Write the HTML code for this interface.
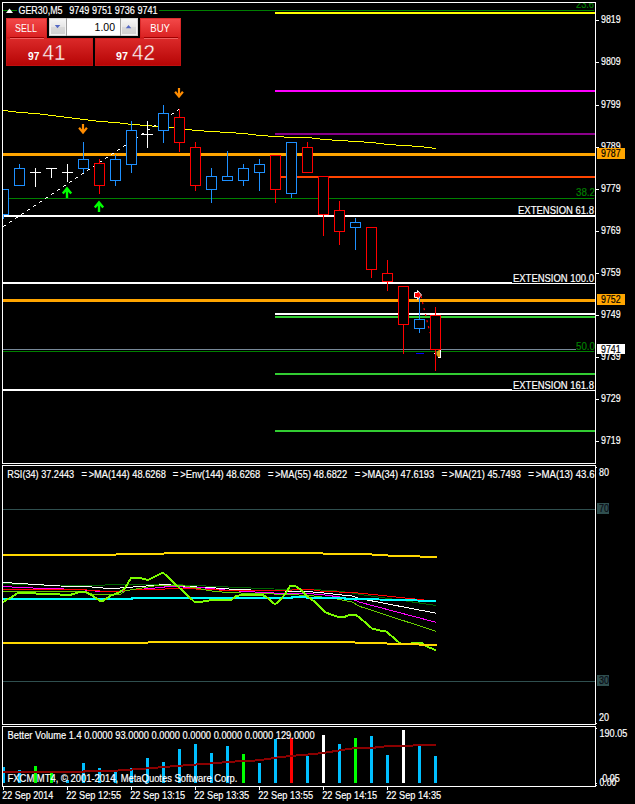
<!DOCTYPE html>
<html><head><meta charset="utf-8"><style>
html,body{margin:0;padding:0;background:#000;}
body{width:635px;height:804px;overflow:hidden;position:relative;}
svg{position:absolute;left:0;top:0;display:block;}
text{font-family:"Liberation Sans",sans-serif;white-space:pre;}
</style></head><body>
<svg width="635" height="804" viewBox="0 0 635 804" shape-rendering="crispEdges">
<defs>
<linearGradient id="gTab" x1="0" y1="0" x2="0" y2="1"><stop offset="0" stop-color="#f44a4a"/><stop offset="1" stop-color="#d92020"/></linearGradient>
<linearGradient id="gLow" x1="0" y1="0" x2="0" y2="1"><stop offset="0" stop-color="#dc2a2a"/><stop offset="1" stop-color="#b50404"/></linearGradient>
<linearGradient id="gBtn" x1="0" y1="0" x2="0" y2="1"><stop offset="0" stop-color="#f4f4f4"/><stop offset="0.5" stop-color="#e6e6e6"/><stop offset="0.5" stop-color="#dadada"/><stop offset="1" stop-color="#d2d2d2"/></linearGradient>
<clipPath id="cMain"><rect x="3" y="3" width="592" height="460"/></clipPath>
<clipPath id="cRsi"><rect x="3" y="466" width="592" height="258"/></clipPath>
<clipPath id="cVol"><rect x="3" y="727" width="592" height="59"/></clipPath>
</defs>
<rect x="2" y="2" width="594" height="1" fill="#ffffff"/>
<rect x="2" y="463" width="594" height="1" fill="#ffffff"/>
<rect x="2" y="2" width="1" height="462" fill="#ffffff"/>
<rect x="595" y="2" width="1" height="462" fill="#ffffff"/>
<rect x="2" y="465" width="594" height="1" fill="#ffffff"/>
<rect x="2" y="724" width="594" height="1" fill="#ffffff"/>
<rect x="2" y="465" width="1" height="260" fill="#ffffff"/>
<rect x="595" y="465" width="1" height="260" fill="#ffffff"/>
<rect x="2" y="726" width="594" height="1" fill="#ffffff"/>
<rect x="2" y="786" width="594" height="1" fill="#ffffff"/>
<rect x="2" y="726" width="1" height="61" fill="#ffffff"/>
<rect x="595" y="726" width="1" height="61" fill="#ffffff"/>
<g clip-path="url(#cMain)">
<rect x="3" y="10" width="591" height="1" fill="#008000"/>
<rect x="275" y="12" width="321" height="2" fill="#ffff00"/>
<rect x="275" y="90" width="321" height="2" fill="#ff00ff"/>
<rect x="275" y="133" width="321" height="2" fill="#8b008b"/>
<rect x="3" y="153" width="593" height="3" fill="#ffa500"/>
<rect x="275" y="176" width="321" height="2" fill="#ff4500"/>
<rect x="3" y="198" width="591" height="1" fill="#008000"/>
<rect x="3" y="215" width="593" height="2" fill="#ffffff"/>
<rect x="3" y="282" width="593" height="2" fill="#ffffff"/>
<rect x="3" y="299" width="593" height="3" fill="#ffa500"/>
<rect x="275" y="313" width="321" height="2" fill="#ffffff"/>
<rect x="275" y="316" width="321" height="2" fill="#32cd32"/>
<rect x="3" y="349" width="573" height="1" fill="#778899"/>
<rect x="3" y="351" width="591" height="1" fill="#008000"/>
<rect x="275" y="373" width="321" height="2" fill="#32cd32"/>
<rect x="3" y="389" width="593" height="2" fill="#ffffff"/>
<rect x="275" y="430" width="321" height="2" fill="#32cd32"/>
<rect x="3" y="110" width="5" height="1" fill="#ffff00"/>
<rect x="8" y="111" width="8" height="1" fill="#ffff00"/>
<rect x="16" y="112" width="12" height="1" fill="#ffff00"/>
<rect x="28" y="113" width="12" height="1" fill="#ffff00"/>
<rect x="40" y="114" width="8" height="1" fill="#ffff00"/>
<rect x="48" y="115" width="8" height="1" fill="#ffff00"/>
<rect x="56" y="116" width="8" height="1" fill="#ffff00"/>
<rect x="64" y="117" width="8" height="1" fill="#ffff00"/>
<rect x="72" y="118" width="8" height="1" fill="#ffff00"/>
<rect x="80" y="119" width="8" height="1" fill="#ffff00"/>
<rect x="88" y="120" width="8" height="1" fill="#ffff00"/>
<rect x="96" y="121" width="12" height="1" fill="#ffff00"/>
<rect x="108" y="122" width="12" height="1" fill="#ffff00"/>
<rect x="120" y="123" width="8" height="1" fill="#ffff00"/>
<rect x="128" y="124" width="12" height="1" fill="#ffff00"/>
<rect x="140" y="125" width="12" height="1" fill="#ffff00"/>
<rect x="152" y="126" width="12" height="1" fill="#ffff00"/>
<rect x="164" y="127" width="12" height="1" fill="#ffff00"/>
<rect x="176" y="128" width="8" height="1" fill="#ffff00"/>
<rect x="184" y="129" width="8" height="1" fill="#ffff00"/>
<rect x="192" y="130" width="12" height="1" fill="#ffff00"/>
<rect x="204" y="131" width="16" height="1" fill="#ffff00"/>
<rect x="220" y="132" width="16" height="1" fill="#ffff00"/>
<rect x="236" y="133" width="12" height="1" fill="#ffff00"/>
<rect x="248" y="134" width="8" height="1" fill="#ffff00"/>
<rect x="256" y="135" width="12" height="1" fill="#ffff00"/>
<rect x="268" y="136" width="16" height="1" fill="#ffff00"/>
<rect x="284" y="137" width="28" height="1" fill="#ffff00"/>
<rect x="312" y="138" width="8" height="1" fill="#ffff00"/>
<rect x="320" y="139" width="12" height="1" fill="#ffff00"/>
<rect x="332" y="140" width="16" height="1" fill="#ffff00"/>
<rect x="348" y="141" width="16" height="1" fill="#ffff00"/>
<rect x="364" y="142" width="12" height="1" fill="#ffff00"/>
<rect x="376" y="143" width="8" height="1" fill="#ffff00"/>
<rect x="384" y="144" width="12" height="1" fill="#ffff00"/>
<rect x="396" y="145" width="16" height="1" fill="#ffff00"/>
<rect x="412" y="146" width="12" height="1" fill="#ffff00"/>
<rect x="424" y="147" width="8" height="1" fill="#ffff00"/>
<rect x="432" y="148" width="4" height="1" fill="#ffff00"/>
<rect x="3" y="226" width="1" height="1" fill="#ffffff"/>
<rect x="4" y="225" width="2" height="1" fill="#ffffff"/>
<rect x="9" y="222" width="1" height="1" fill="#ffffff"/>
<rect x="10" y="221" width="2" height="1" fill="#ffffff"/>
<rect x="15" y="218" width="1" height="1" fill="#ffffff"/>
<rect x="16" y="217" width="2" height="1" fill="#ffffff"/>
<rect x="21" y="214" width="1" height="1" fill="#ffffff"/>
<rect x="22" y="213" width="2" height="1" fill="#ffffff"/>
<rect x="27" y="210" width="1" height="1" fill="#ffffff"/>
<rect x="28" y="209" width="2" height="1" fill="#ffffff"/>
<rect x="33" y="206" width="1" height="1" fill="#ffffff"/>
<rect x="34" y="205" width="2" height="1" fill="#ffffff"/>
<rect x="39" y="202" width="1" height="1" fill="#ffffff"/>
<rect x="40" y="201" width="2" height="1" fill="#ffffff"/>
<rect x="45" y="198" width="1" height="1" fill="#ffffff"/>
<rect x="46" y="197" width="2" height="1" fill="#ffffff"/>
<rect x="51" y="194" width="1" height="1" fill="#ffffff"/>
<rect x="52" y="193" width="2" height="1" fill="#ffffff"/>
<rect x="57" y="190" width="1" height="1" fill="#ffffff"/>
<rect x="58" y="189" width="2" height="1" fill="#ffffff"/>
<rect x="63" y="186" width="1" height="1" fill="#ffffff"/>
<rect x="64" y="185" width="2" height="1" fill="#ffffff"/>
<rect x="69" y="182" width="1" height="1" fill="#ffffff"/>
<rect x="70" y="181" width="2" height="1" fill="#ffffff"/>
<rect x="75" y="178" width="1" height="1" fill="#ffffff"/>
<rect x="76" y="177" width="2" height="1" fill="#ffffff"/>
<rect x="81" y="174" width="1" height="1" fill="#ffffff"/>
<rect x="82" y="173" width="2" height="1" fill="#ffffff"/>
<rect x="87" y="170" width="1" height="1" fill="#ffffff"/>
<rect x="88" y="169" width="2" height="1" fill="#ffffff"/>
<rect x="93" y="166" width="1" height="1" fill="#ffffff"/>
<rect x="94" y="165" width="2" height="1" fill="#ffffff"/>
<rect x="99" y="162" width="1" height="1" fill="#ffffff"/>
<rect x="100" y="161" width="2" height="1" fill="#ffffff"/>
<rect x="105" y="158" width="1" height="1" fill="#ffffff"/>
<rect x="106" y="157" width="2" height="1" fill="#ffffff"/>
<rect x="111" y="154" width="1" height="1" fill="#ffffff"/>
<rect x="112" y="153" width="2" height="1" fill="#ffffff"/>
<rect x="117" y="150" width="1" height="1" fill="#ffffff"/>
<rect x="118" y="149" width="2" height="1" fill="#ffffff"/>
<rect x="123" y="146" width="1" height="1" fill="#ffffff"/>
<rect x="124" y="145" width="2" height="1" fill="#ffffff"/>
<rect x="129" y="142" width="1" height="1" fill="#ffffff"/>
<rect x="130" y="141" width="2" height="1" fill="#ffffff"/>
<rect x="135" y="138" width="1" height="1" fill="#ffffff"/>
<rect x="136" y="137" width="2" height="1" fill="#ffffff"/>
<rect x="141" y="134" width="1" height="1" fill="#ffffff"/>
<rect x="142" y="133" width="2" height="1" fill="#ffffff"/>
<rect x="147" y="130" width="1" height="1" fill="#ffffff"/>
<rect x="148" y="129" width="2" height="1" fill="#ffffff"/>
<rect x="153" y="126" width="1" height="1" fill="#ffffff"/>
<rect x="154" y="125" width="2" height="1" fill="#ffffff"/>
<rect x="159" y="122" width="1" height="1" fill="#ffffff"/>
<rect x="160" y="121" width="2" height="1" fill="#ffffff"/>
<rect x="165" y="118" width="1" height="1" fill="#ffffff"/>
<rect x="166" y="117" width="2" height="1" fill="#ffffff"/>
<rect x="171" y="114" width="1" height="1" fill="#ffffff"/>
<rect x="172" y="113" width="2" height="1" fill="#ffffff"/>
<rect x="177" y="110" width="1" height="1" fill="#ffffff"/>
<rect x="178" y="109" width="2" height="1" fill="#ffffff"/>
<rect x="3" y="189" width="1" height="30" fill="#1e90ff"/>
<rect x="-1.5" y="189.5" width="10" height="25" fill="#000" stroke="#1e90ff" stroke-width="1"/>
<rect x="19" y="164" width="1" height="22" fill="#1e90ff"/>
<rect x="14.5" y="168.5" width="10" height="17" fill="#000" stroke="#1e90ff" stroke-width="1"/>
<rect x="35" y="168" width="1" height="19" fill="#ffffff"/>
<rect x="30" y="172" width="11" height="1" fill="#ffffff"/>
<rect x="51" y="168" width="1" height="10" fill="#ffffff"/>
<rect x="46" y="168" width="11" height="1" fill="#ffffff"/>
<rect x="67" y="164" width="1" height="18" fill="#ffffff"/>
<rect x="62" y="172" width="11" height="1" fill="#ffffff"/>
<rect x="83" y="142" width="1" height="31" fill="#1e90ff"/>
<rect x="78.5" y="159.5" width="10" height="9" fill="#000" stroke="#1e90ff" stroke-width="1"/>
<rect x="99" y="159" width="1" height="35" fill="#ff0000"/>
<rect x="94.5" y="163.5" width="10" height="22" fill="#000" stroke="#ff0000" stroke-width="1"/>
<rect x="115" y="155" width="1" height="31" fill="#1e90ff"/>
<rect x="110.5" y="159.5" width="10" height="21" fill="#000" stroke="#1e90ff" stroke-width="1"/>
<rect x="131" y="121" width="1" height="52" fill="#1e90ff"/>
<rect x="126.5" y="130.5" width="10" height="34" fill="#000" stroke="#1e90ff" stroke-width="1"/>
<rect x="147" y="121" width="1" height="27" fill="#ffffff"/>
<rect x="142" y="134" width="11" height="1" fill="#ffffff"/>
<rect x="163" y="105" width="1" height="38" fill="#1e90ff"/>
<rect x="158.5" y="113.5" width="10" height="17" fill="#000" stroke="#1e90ff" stroke-width="1"/>
<rect x="179" y="109" width="1" height="43" fill="#ff0000"/>
<rect x="174.5" y="117.5" width="10" height="25" fill="#000" stroke="#ff0000" stroke-width="1"/>
<rect x="195" y="142" width="1" height="49" fill="#ff0000"/>
<rect x="190.5" y="147.5" width="10" height="38" fill="#000" stroke="#ff0000" stroke-width="1"/>
<rect x="211" y="168" width="1" height="35" fill="#1e90ff"/>
<rect x="206.5" y="176.5" width="10" height="13" fill="#000" stroke="#1e90ff" stroke-width="1"/>
<rect x="227" y="151" width="1" height="30" fill="#1e90ff"/>
<rect x="222.5" y="176.5" width="10" height="4" fill="#000" stroke="#1e90ff" stroke-width="1"/>
<rect x="243" y="164" width="1" height="22" fill="#1e90ff"/>
<rect x="238.5" y="168.5" width="10" height="12" fill="#000" stroke="#1e90ff" stroke-width="1"/>
<rect x="259" y="159" width="1" height="32" fill="#1e90ff"/>
<rect x="254.5" y="164.5" width="10" height="8" fill="#000" stroke="#1e90ff" stroke-width="1"/>
<rect x="275" y="155" width="1" height="48" fill="#ff0000"/>
<rect x="270.5" y="155.5" width="10" height="34" fill="#000" stroke="#ff0000" stroke-width="1"/>
<rect x="291" y="142" width="1" height="56" fill="#1e90ff"/>
<rect x="286.5" y="142.5" width="10" height="51" fill="#000" stroke="#1e90ff" stroke-width="1"/>
<rect x="307" y="142" width="1" height="31" fill="#ff0000"/>
<rect x="302.5" y="147.5" width="10" height="25" fill="#000" stroke="#ff0000" stroke-width="1"/>
<rect x="323" y="176" width="1" height="60" fill="#ff0000"/>
<rect x="318.5" y="176.5" width="10" height="38" fill="#000" stroke="#ff0000" stroke-width="1"/>
<rect x="339" y="201" width="1" height="44" fill="#ff0000"/>
<rect x="334.5" y="210.5" width="10" height="21" fill="#000" stroke="#ff0000" stroke-width="1"/>
<rect x="355" y="218" width="1" height="32" fill="#1e90ff"/>
<rect x="350.5" y="222.5" width="10" height="5" fill="#000" stroke="#1e90ff" stroke-width="1"/>
<rect x="371" y="227" width="1" height="51" fill="#ff0000"/>
<rect x="366.5" y="227.5" width="10" height="42" fill="#000" stroke="#ff0000" stroke-width="1"/>
<rect x="387" y="260" width="1" height="31" fill="#ff0000"/>
<rect x="382.5" y="273.5" width="10" height="8" fill="#000" stroke="#ff0000" stroke-width="1"/>
<rect x="403" y="286" width="1" height="68" fill="#ff0000"/>
<rect x="398.5" y="286.5" width="10" height="38" fill="#000" stroke="#ff0000" stroke-width="1"/>
<rect x="419" y="294" width="1" height="39" fill="#1e90ff"/>
<rect x="414.5" y="319.5" width="10" height="9" fill="#000" stroke="#1e90ff" stroke-width="1"/>
<rect x="435" y="307" width="1" height="64" fill="#ff0000"/>
<rect x="430.5" y="315.5" width="10" height="34" fill="#000" stroke="#ff0000" stroke-width="1"/>
<path d="M83 124 V133 M79.1 127.8 L83 132.6 L86.9 127.8" fill="none" stroke="#ff8c00" stroke-width="2.2" shape-rendering="auto"/>
<path d="M179 88 V97 M175.1 91.8 L179 96.6 L182.9 91.8" fill="none" stroke="#ff8c00" stroke-width="2.2" shape-rendering="auto"/>
<path d="M67 198 V188.5 M62.8 193.4 L67 188.4 L71.2 193.4" fill="none" stroke="#00ff00" stroke-width="2.4" shape-rendering="auto"/>
<path d="M99 212 V202.5 M94.8 207.4 L99 202.4 L103.2 207.4" fill="none" stroke="#00ff00" stroke-width="2.4" shape-rendering="auto"/>
<path d="M414.5 292.5 h3 v-2 l4 4.5 l-4 4.5 v-2 h-3 z" fill="#ff0000" stroke="#ffffff" stroke-width="1" shape-rendering="auto"/>
<line x1="421" y1="296" x2="430" y2="333" stroke="#ff0000" stroke-width="1.2" stroke-dasharray="2.2 4" shape-rendering="auto"/>
<rect x="416" y="353" width="8" height="1" fill="#0000ff"/>
<path d="M436.5 352 L439 350 L440 350 L440 357.5 L438.5 357.5 L436.5 355 Z" fill="#daa520" shape-rendering="auto"/>
<rect x="440" y="350" width="1" height="8" fill="#ffffff"/>
<rect x="438" y="357" width="3" height="1" fill="#ffffff"/>
<rect x="434" y="353" width="1" height="1" fill="#ffffff"/>
<rect x="17" y="4" width="142" height="12" fill="#000"/>
<path d="M6 13 L13 13 L9.5 8.5 Z" fill="#fff" shape-rendering="auto"/>
<text x="18.5" y="14" font-size="10.3" fill="#ffffff" stroke="#ffffff" stroke-width="0.18" textLength="44" lengthAdjust="spacingAndGlyphs">GER30,M5</text>
<text x="69.2" y="14" font-size="10.3" fill="#ffffff" stroke="#ffffff" stroke-width="0.18" textLength="88.5" lengthAdjust="spacingAndGlyphs">9749 9751 9736 9741</text>
<text x="576" y="8" font-size="10.3" fill="#008000" stroke="#008000" stroke-width="0.18" textLength="18" lengthAdjust="spacingAndGlyphs">23.6</text>
<text x="576" y="196" font-size="10.3" fill="#008000" stroke="#008000" stroke-width="0.18" textLength="19" lengthAdjust="spacingAndGlyphs">38.2</text>
<text x="576" y="349.5" font-size="10.3" fill="#008000" stroke="#008000" stroke-width="0.18" textLength="19" lengthAdjust="spacingAndGlyphs">50.0</text>
<rect x="517" y="204" width="78" height="11.0" fill="#000"/>
<text x="518" y="213.8" font-size="10.3" fill="#ffffff" stroke="#ffffff" stroke-width="0.18" textLength="76" lengthAdjust="spacingAndGlyphs">EXTENSION 61.8</text>
<rect x="512" y="272" width="83" height="10.699999999999989" fill="#000"/>
<text x="513" y="281.5" font-size="10.3" fill="#ffffff" stroke="#ffffff" stroke-width="0.18" textLength="81" lengthAdjust="spacingAndGlyphs">EXTENSION 100.0</text>
<rect x="512" y="379" width="83" height="11.0" fill="#000"/>
<text x="513" y="388.8" font-size="10.3" fill="#ffffff" stroke="#ffffff" stroke-width="0.18" textLength="81" lengthAdjust="spacingAndGlyphs">EXTENSION 161.8</text>
</g>
<rect x="47" y="17" width="93" height="21" fill="#000"/>
<rect x="6" y="18" width="41" height="20" fill="url(#gTab)"/>
<rect x="140" y="18" width="41" height="20" fill="url(#gTab)"/>
<rect x="6" y="38" width="87" height="28" fill="url(#gLow)"/>
<rect x="95" y="38" width="86" height="28" fill="url(#gLow)"/>
<rect x="6.5" y="18.5" width="40" height="19" fill="none" stroke="#c81818" stroke-opacity="0.55"/>
<rect x="140.5" y="18.5" width="40" height="19" fill="none" stroke="#c81818" stroke-opacity="0.55"/>
<rect x="6.5" y="38.5" width="86" height="27" fill="none" stroke="#c81818" stroke-opacity="0.55"/>
<rect x="95.5" y="38.5" width="85" height="27" fill="none" stroke="#c81818" stroke-opacity="0.55"/>
<rect x="10" y="37" width="34" height="1" fill="#a00000"/>
<rect x="10" y="38" width="34" height="1" fill="#f06060"/>
<rect x="144" y="37" width="34" height="1" fill="#a00000"/>
<rect x="144" y="38" width="34" height="1" fill="#f06060"/>
<text x="15.1" y="32" font-size="10.8" fill="#fff" textLength="21.8" lengthAdjust="spacingAndGlyphs">SELL</text>
<text x="150.3" y="32" font-size="10.8" fill="#fff" textLength="19.7" lengthAdjust="spacingAndGlyphs">BUY</text>
<text x="28" y="59.5" font-size="10.8" fill="#fff" textLength="11.4" lengthAdjust="spacingAndGlyphs" font-weight="bold">97</text>
<text x="42.5" y="59.5" font-size="21.5" fill="#fff" textLength="23" lengthAdjust="spacingAndGlyphs" stroke="#c41414" stroke-width="0.4">41</text>
<text x="116" y="59.5" font-size="10.8" fill="#fff" textLength="11.9" lengthAdjust="spacingAndGlyphs" font-weight="bold">97</text>
<text x="132" y="59.5" font-size="21.5" fill="#fff" textLength="23" lengthAdjust="spacingAndGlyphs" stroke="#c41414" stroke-width="0.4">42</text>
<rect x="49" y="18" width="89" height="18" fill="#d4d4d4"/>
<rect x="50" y="19" width="16" height="16" fill="#f2f2f2"/>
<rect x="51" y="20" width="14" height="14" fill="url(#gBtn)"/>
<rect x="121" y="19" width="16" height="16" fill="#f2f2f2"/>
<rect x="122" y="20" width="14" height="14" fill="url(#gBtn)"/>
<rect x="66" y="18" width="1" height="18" fill="#a0a0a0"/>
<rect x="120" y="18" width="1" height="18" fill="#a0a0a0"/>
<rect x="67" y="19" width="53" height="16" fill="#ffffff"/>
<path d="M54.8 25 L60.3 25 L57.5 28.3 Z" fill="#5468c4" shape-rendering="auto"/>
<path d="M125.8 28.3 L131.3 28.3 L128.5 25 Z" fill="#5468c4" shape-rendering="auto"/>
<text x="115" y="30.7" font-size="10.5" fill="#000" text-anchor="end">1.00</text>
<rect x="596" y="20" width="3" height="1" fill="#ffffff"/>
<text x="601" y="23.1" font-size="10.3" fill="#ffffff" stroke="#ffffff" stroke-width="0.18" textLength="19.7" lengthAdjust="spacingAndGlyphs">9819</text>
<rect x="596" y="62" width="3" height="1" fill="#ffffff"/>
<text x="601" y="65.1" font-size="10.3" fill="#ffffff" stroke="#ffffff" stroke-width="0.18" textLength="19.7" lengthAdjust="spacingAndGlyphs">9809</text>
<rect x="596" y="105" width="3" height="1" fill="#ffffff"/>
<text x="601" y="108.1" font-size="10.3" fill="#ffffff" stroke="#ffffff" stroke-width="0.18" textLength="19.7" lengthAdjust="spacingAndGlyphs">9799</text>
<rect x="596" y="147" width="3" height="1" fill="#ffffff"/>
<text x="601" y="150.1" font-size="10.3" fill="#ffffff" stroke="#ffffff" stroke-width="0.18" textLength="19.7" lengthAdjust="spacingAndGlyphs">9789</text>
<rect x="596" y="189" width="3" height="1" fill="#ffffff"/>
<text x="601" y="192.1" font-size="10.3" fill="#ffffff" stroke="#ffffff" stroke-width="0.18" textLength="19.7" lengthAdjust="spacingAndGlyphs">9779</text>
<rect x="596" y="231" width="3" height="1" fill="#ffffff"/>
<text x="601" y="234.1" font-size="10.3" fill="#ffffff" stroke="#ffffff" stroke-width="0.18" textLength="19.7" lengthAdjust="spacingAndGlyphs">9769</text>
<rect x="596" y="273" width="3" height="1" fill="#ffffff"/>
<text x="601" y="276.1" font-size="10.3" fill="#ffffff" stroke="#ffffff" stroke-width="0.18" textLength="19.7" lengthAdjust="spacingAndGlyphs">9759</text>
<rect x="596" y="315" width="3" height="1" fill="#ffffff"/>
<text x="601" y="318.1" font-size="10.3" fill="#ffffff" stroke="#ffffff" stroke-width="0.18" textLength="19.7" lengthAdjust="spacingAndGlyphs">9749</text>
<rect x="596" y="357" width="3" height="1" fill="#ffffff"/>
<text x="601" y="360.1" font-size="10.3" fill="#ffffff" stroke="#ffffff" stroke-width="0.18" textLength="19.7" lengthAdjust="spacingAndGlyphs">9739</text>
<rect x="596" y="399" width="3" height="1" fill="#ffffff"/>
<text x="601" y="402.1" font-size="10.3" fill="#ffffff" stroke="#ffffff" stroke-width="0.18" textLength="19.7" lengthAdjust="spacingAndGlyphs">9729</text>
<rect x="596" y="441" width="3" height="1" fill="#ffffff"/>
<text x="601" y="444.1" font-size="10.3" fill="#ffffff" stroke="#ffffff" stroke-width="0.18" textLength="19.7" lengthAdjust="spacingAndGlyphs">9719</text>
<rect x="597" y="148" width="28" height="11" fill="#ffa500"/>
<text x="601" y="156.7" font-size="10.3" fill="#000" stroke="#000" stroke-width="0.18" textLength="19.7" lengthAdjust="spacingAndGlyphs">9787</text>
<rect x="597" y="294" width="28" height="11" fill="#ffa500"/>
<text x="601" y="302.7" font-size="10.3" fill="#000" stroke="#000" stroke-width="0.18" textLength="19.7" lengthAdjust="spacingAndGlyphs">9752</text>
<rect x="597" y="344" width="28" height="10" fill="#ffffff"/>
<text x="601" y="352.7" font-size="10.3" fill="#000" stroke="#000" stroke-width="0.18" textLength="19.7" lengthAdjust="spacingAndGlyphs">9741</text>
<g clip-path="url(#cRsi)">
<text x="7.2" y="477.8" font-size="10.3" fill="#ffffff" stroke="#ffffff" stroke-width="0.18" textLength="67" lengthAdjust="spacingAndGlyphs">RSI(34) 37.2443</text>
<text x="81.4" y="477.8" font-size="10.3" fill="#ffffff" stroke="#ffffff" stroke-width="0.18" textLength="84.4" lengthAdjust="spacingAndGlyphs">= &gt;MA(144) 48.6268</text>
<text x="172.8" y="477.8" font-size="10.3" fill="#ffffff" stroke="#ffffff" stroke-width="0.18" textLength="87.5" lengthAdjust="spacingAndGlyphs">= &gt;Env(144) 48.6268</text>
<text x="267.9" y="477.8" font-size="10.3" fill="#ffffff" stroke="#ffffff" stroke-width="0.18" textLength="79.3" lengthAdjust="spacingAndGlyphs">= &gt;MA(55) 48.6822</text>
<text x="354.8" y="477.8" font-size="10.3" fill="#ffffff" stroke="#ffffff" stroke-width="0.18" textLength="79.4" lengthAdjust="spacingAndGlyphs">= &gt;MA(34) 47.6193</text>
<text x="441.7" y="477.8" font-size="10.3" fill="#ffffff" stroke="#ffffff" stroke-width="0.18" textLength="79.3" lengthAdjust="spacingAndGlyphs">= &gt;MA(21) 45.7493</text>
<text x="528.3" y="477.8" font-size="10.3" fill="#ffffff" stroke="#ffffff" stroke-width="0.18" textLength="66.2" lengthAdjust="spacingAndGlyphs">= &gt;MA(13) 43.6</text>
<rect x="3" y="509" width="592" height="1" fill="#2f4f4f"/>
<rect x="3" y="681" width="592" height="1" fill="#2f4f4f"/>
<polyline points="3,583.5 20,584.5 68,585.7 160,584 260,588.4 274,589 321,590 337,591 352,593 360,594.4 436,605.4" fill="none" stroke="#006400" stroke-width="1" stroke-linejoin="miter"/>
<polyline points="3,582.5 12,583 28,584 44,585 60,586 88,586.5 96,587.5 110,588.5 120,588 140,586.5 165,584.5 180,585.8 197,587 212,587.7 236,589.5 260,590.3 284,591 306,591.5 321,592.6 337,594.5 352,596 360,598.6 436,613.2" fill="none" stroke="#ffffff" stroke-width="1" stroke-linejoin="miter"/>
<polyline points="3,586.4 20,587.6 80,589.5 100,591.5 120,591.5 130,590 150,588.6 170,586.4 205,588 230,590.5 252,591.7 260,592.6 274,593 290,593 306,593.5 321,594.5 337,596.6 352,599 360,602.3 436,622.3" fill="none" stroke="#ff00ff" stroke-width="1" stroke-linejoin="miter"/>
<polyline points="3,589.3 80,589.5 100,591 120,591 130,590 150,589.5 165,589 180,588.3 230,590.5 252,590.8 312,589.6 320,591 360,593.1 436,601.3" fill="none" stroke="#ff0000" stroke-width="1" stroke-linejoin="miter"/>
<polyline points="3,591.4 80,592 96,594.6 120,594.6 125,590.8 160,585 180,585 210,590.8 228,592.6 290,594.5 312,595.7 337,599 352,602 360,606.5 436,631.3" fill="none" stroke="#66cc00" stroke-width="1" stroke-linejoin="miter"/>
<polyline points="3,599 132,599 132,598 292,598 292,596.5 307,596.5 307,598.3 345,598.3 345,599 360,599 436,601" fill="none" stroke="#00ffff" stroke-width="2" stroke-linejoin="miter"/>
<polyline points="3,602 8,599 12,597 16,594 18,593 28,593 44,594 60,594.5 70,595 80,592 86,592 96,598 100,601 103,601 110,596 120,592 125,588 131,578 140,578 148,580 163,572.6 194.6,602 200,602 206,601 211.6,600 232,599.5 236,596 245,594.5 262,594.5 268,598 275,604.5 280,600 286,593 290,586 295,586 300,589 307,596 315,602 325,612 333,615.3 339,617 345.5,616.5 350.5,614.6 355.6,614.6 360,618 372,628.4 377.6,630 386.4,631.6 391.5,636 400.3,643.5 411,643.5 412,642.5 421.7,642.5 425.5,646 436,650.2" fill="none" stroke="#7cfc00" stroke-width="2" stroke-linejoin="miter"/>
<rect x="3" y="554" width="113" height="2" fill="#ffd700"/>
<rect x="116" y="553" width="48" height="2" fill="#ffd700"/>
<rect x="164" y="552" width="159" height="2" fill="#ffd700"/>
<rect x="323" y="553" width="49" height="2" fill="#ffd700"/>
<rect x="372" y="554" width="16" height="2" fill="#ffd700"/>
<rect x="388" y="555" width="32" height="2" fill="#ffd700"/>
<rect x="420" y="556" width="17" height="2" fill="#ffd700"/>
<rect x="3" y="642" width="145" height="2" fill="#ffd700"/>
<rect x="148" y="641" width="207" height="2" fill="#ffd700"/>
<rect x="355" y="642" width="32" height="2" fill="#ffd700"/>
<rect x="387" y="643" width="32" height="2" fill="#ffd700"/>
<rect x="419" y="644" width="18" height="2" fill="#ffd700"/>
</g>
<rect x="597" y="503" width="12" height="11" fill="#2f4f4f"/>
<text x="599" y="512.3" font-size="10.3" fill="#0a0a14" stroke="#0a0a14" stroke-width="0.18" textLength="10" lengthAdjust="spacingAndGlyphs">70</text>
<rect x="597" y="675" width="12" height="11" fill="#2f4f4f"/>
<text x="599" y="684.3" font-size="10.3" fill="#0a0a14" stroke="#0a0a14" stroke-width="0.18" textLength="10" lengthAdjust="spacingAndGlyphs">30</text>
<text x="599" y="476.2" font-size="10.3" fill="#ffffff" stroke="#ffffff" stroke-width="0.18" textLength="10" lengthAdjust="spacingAndGlyphs">80</text>
<text x="599" y="720.7" font-size="10.3" fill="#ffffff" stroke="#ffffff" stroke-width="0.18" textLength="10" lengthAdjust="spacingAndGlyphs">20</text>
<rect x="596" y="467" width="1" height="1" fill="#ffffff"/>
<rect x="596" y="723" width="1" height="1" fill="#ffffff"/>
<g clip-path="url(#cVol)">
<rect x="2" y="767" width="3" height="16" fill="#00bfff"/>
<rect x="18" y="770" width="3" height="13" fill="#00bfff"/>
<rect x="34" y="766" width="3" height="17" fill="#00ff00"/>
<rect x="50" y="773" width="3" height="10" fill="#00ff00"/>
<rect x="66" y="780" width="3" height="3" fill="#00bfff"/>
<rect x="82" y="763" width="3" height="20" fill="#00bfff"/>
<rect x="98" y="768" width="3" height="15" fill="#00bfff"/>
<rect x="114" y="772" width="3" height="11" fill="#00bfff"/>
<rect x="130" y="768" width="3" height="15" fill="#00bfff"/>
<rect x="146" y="758" width="3" height="25" fill="#00bfff"/>
<rect x="162" y="762" width="3" height="21" fill="#00bfff"/>
<rect x="178" y="749" width="3" height="34" fill="#00bfff"/>
<rect x="194" y="744" width="3" height="39" fill="#00bfff"/>
<rect x="210" y="753" width="3" height="30" fill="#00bfff"/>
<rect x="226" y="746" width="3" height="37" fill="#00bfff"/>
<rect x="242" y="754" width="3" height="29" fill="#00ff00"/>
<rect x="258" y="763" width="3" height="20" fill="#00bfff"/>
<rect x="274" y="739" width="3" height="44" fill="#00bfff"/>
<rect x="290" y="738" width="3" height="45" fill="#ff0000"/>
<rect x="306" y="756" width="3" height="27" fill="#00bfff"/>
<rect x="322" y="735" width="3" height="48" fill="#ffffff"/>
<rect x="338" y="744" width="3" height="39" fill="#00bfff"/>
<rect x="354" y="738" width="3" height="45" fill="#00ff00"/>
<rect x="370" y="736" width="3" height="47" fill="#00bfff"/>
<rect x="386" y="755" width="3" height="28" fill="#00bfff"/>
<rect x="402" y="730" width="3" height="53" fill="#ffffff"/>
<rect x="418" y="746" width="3" height="37" fill="#00bfff"/>
<rect x="434" y="756" width="3" height="27" fill="#00bfff"/>
<polyline points="3,772 84,772 84,771 117,770.6 145,768.6 179,765.8 210,763.5 238.6,761.2 259.5,760.3 275,757.8 291,755.9 307,754.6 323,753 339,750.5 355,748 371,748 389,746 404,745.7 436,745" fill="none" stroke="#8b0000" stroke-width="2" stroke-linejoin="miter"/>
<text x="7.6" y="781.9" font-size="10.3" fill="#ffffff" stroke="#ffffff" stroke-width="0.18" textLength="229.7" lengthAdjust="spacingAndGlyphs">FXCM MT4, © 2001-2014, MetaQuotes Software Corp.</text>
<text x="7.6" y="738.6" font-size="10.3" fill="#ffffff" stroke="#ffffff" stroke-width="0.18" textLength="307" lengthAdjust="spacingAndGlyphs">Better Volume 1.4 0.0000 93.0000 0.0000 0.0000 0.0000 0.0000 129.0000</text>
</g>
<text x="599.5" y="736.5" font-size="10" fill="#ffffff" stroke="#ffffff" stroke-width="0.18" textLength="27.8" lengthAdjust="spacingAndGlyphs">190.05</text>
<text x="602.2" y="782" font-size="10.3" fill="#ffffff" stroke="#ffffff" stroke-width="0.18" textLength="17.6" lengthAdjust="spacingAndGlyphs">0.05</text>
<text x="599.4" y="785.6" font-size="10.3" fill="#ffffff" stroke="#ffffff" stroke-width="0.18" textLength="17" lengthAdjust="spacingAndGlyphs">0.00</text>
<rect x="596" y="728" width="1" height="1" fill="#ffffff"/>
<rect x="596" y="783" width="1" height="1" fill="#ffffff"/>
<rect x="596" y="785" width="1" height="1" fill="#ffffff"/>
<rect x="3" y="787" width="1" height="3" fill="#ffffff"/>
<text x="2.2" y="798.7" font-size="10.3" fill="#ffffff" stroke="#ffffff" stroke-width="0.18" textLength="51" lengthAdjust="spacingAndGlyphs">22 Sep 2014</text>
<rect x="67" y="787" width="1" height="3" fill="#ffffff"/>
<text x="66.2" y="798.7" font-size="10.3" fill="#ffffff" stroke="#ffffff" stroke-width="0.18" textLength="55" lengthAdjust="spacingAndGlyphs">22 Sep 12:55</text>
<rect x="131" y="787" width="1" height="3" fill="#ffffff"/>
<text x="130.2" y="798.7" font-size="10.3" fill="#ffffff" stroke="#ffffff" stroke-width="0.18" textLength="55" lengthAdjust="spacingAndGlyphs">22 Sep 13:15</text>
<rect x="195" y="787" width="1" height="3" fill="#ffffff"/>
<text x="194.2" y="798.7" font-size="10.3" fill="#ffffff" stroke="#ffffff" stroke-width="0.18" textLength="55" lengthAdjust="spacingAndGlyphs">22 Sep 13:35</text>
<rect x="259" y="787" width="1" height="3" fill="#ffffff"/>
<text x="258.2" y="798.7" font-size="10.3" fill="#ffffff" stroke="#ffffff" stroke-width="0.18" textLength="55" lengthAdjust="spacingAndGlyphs">22 Sep 13:55</text>
<rect x="323" y="787" width="1" height="3" fill="#ffffff"/>
<text x="322.2" y="798.7" font-size="10.3" fill="#ffffff" stroke="#ffffff" stroke-width="0.18" textLength="55" lengthAdjust="spacingAndGlyphs">22 Sep 14:15</text>
<rect x="387" y="787" width="1" height="3" fill="#ffffff"/>
<text x="386.2" y="798.7" font-size="10.3" fill="#ffffff" stroke="#ffffff" stroke-width="0.18" textLength="55" lengthAdjust="spacingAndGlyphs">22 Sep 14:35</text>
</svg>
</body></html>
